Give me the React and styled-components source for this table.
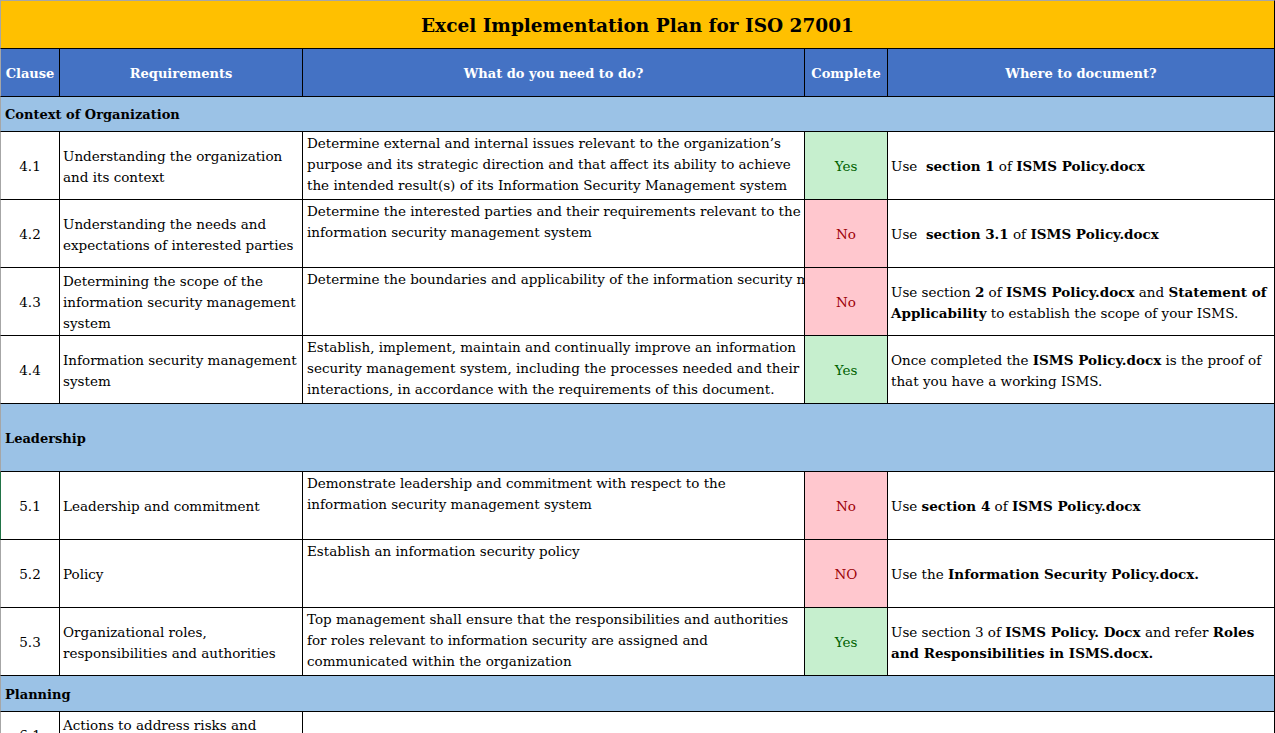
import React from 'react';
import styled, { createGlobalStyle } from 'styled-components';

const FONT = `"DejaVu Serif", "Liberation Serif", serif`;

const GlobalStyle = createGlobalStyle`
  html, body { margin: 0; padding: 0; background: #fff; }
  body { font-family: ${FONT}; color: #000; overflow: hidden; }
  * { box-sizing: border-box; }
`;

const Sheet = styled.div`
  width: 1275px;
  display: grid;
  grid-template-columns: 60px 243px 502px 83px 387px;
  font-size: 13.5px;
  line-height: 21px;
`;

const Title = styled.div`
  grid-column: 1 / -1;
  height: 49px;
  background: #ffc000;
  border: 1px solid #000;
  border-top-color: #a6a6a6;
  border-left-color: #a6a6a6;
  display: flex;
  align-items: center;
  justify-content: center;
  padding-top: 2px;
  font-weight: 700;
  font-size: 18.5px;
`;

const Cell = styled.div`
  height: ${(p) => p.$h || 68}px;
  border-right: 1px solid #000;
  border-bottom: 1px solid #000;
  background: #fff;
  display: flex;
  flex-direction: column;
  justify-content: center;
  padding: 2px 3px 0;
  overflow: hidden;
  white-space: nowrap;
`;

const HeadCell = styled(Cell)`
  height: 48px;
  background: #4472c4;
  color: #fff;
  font-weight: 700;
  font-size: 13px;
  align-items: center;
  border-left: ${(p) => (p.$first ? '1px solid #a6a6a6' : 'none')};
`;

const SectionRow = styled.div`
  grid-column: 1 / -1;
  height: ${(p) => p.$h}px;
  background: #9bc2e6;
  border-left: 1px solid #a6a6a6;
  border-right: 1px solid #000;
  border-bottom: 1px solid #000;
  display: flex;
  align-items: center;
  padding: 1px 4px 0;
  font-weight: 700;
  font-size: 13px;
`;

const ClauseCell = styled(Cell)`
  align-items: center;
  border-left: 1px solid ${(p) => (p.$marked ? '#217346' : '#a6a6a6')};
`;

const ReqCell = styled(Cell)``;

const TaskCell = styled(Cell)`
  justify-content: flex-start;
  padding: 1px 4px 0;
`;

const StatusCell = styled(Cell)`
  align-items: center;
  background: ${(p) => (p.$ok ? '#c6efce' : '#ffc7ce')};
  color: ${(p) => (p.$ok ? '#006100' : '#9c0006')};
`;

const DocCell = styled(Cell)``;

const OpenCell = styled(Cell)`
  grid-column: 3 / -1;
`;

const Line = styled.div``;

const rows = [
  {
    clause: '4.1',
    req: ['Understanding the organization', 'and its context'],
    task: [
      'Determine external and internal issues relevant to the organization’s',
      'purpose and its strategic direction and that affect its ability to achieve',
      'the intended result(s) of its Information Security Management system',
    ],
    status: 'Yes',
    doc: [<>Use&nbsp; <b>section 1</b> of <b>ISMS Policy.docx</b></>],
  },
  {
    clause: '4.2',
    req: ['Understanding the needs and', 'expectations of interested parties'],
    task: [
      'Determine the interested parties and their requirements relevant to the',
      'information security management system',
    ],
    status: 'No',
    doc: [<>Use&nbsp; <b>section 3.1</b> of <b>ISMS Policy.docx</b></>],
  },
  {
    clause: '4.3',
    req: ['Determining the scope of the', 'information security management', 'system'],
    task: ['Determine the boundaries and applicability of the information security management system to establish its scope.'],
    status: 'No',
    doc: [
      <>Use section <b>2</b> of <b>ISMS Policy.docx</b> and <b>Statement of</b></>,
      <><b>Applicability</b> to establish the scope of your ISMS.</>,
    ],
  },
  {
    clause: '4.4',
    req: ['Information security management', 'system'],
    task: [
      'Establish, implement, maintain and continually improve an information',
      'security management system, including the processes needed and their',
      'interactions, in accordance with the requirements of this document.',
    ],
    status: 'Yes',
    doc: [
      <>Once completed the <b>ISMS Policy.docx</b> is the proof of</>,
      <>that you have a working ISMS.</>,
    ],
  },
  { section: 'Leadership', h: 68 },
  {
    clause: '5.1',
    marked: true,
    req: ['Leadership and commitment'],
    task: [
      'Demonstrate leadership and commitment with respect to the',
      'information security management system',
    ],
    status: 'No',
    doc: [<>Use <b>section 4</b> of <b>ISMS Policy.docx</b></>],
  },
  {
    clause: '5.2',
    req: ['Policy'],
    task: ['Establish an information security policy'],
    status: 'NO',
    doc: [<>Use the <b>Information Security Policy.docx.</b></>],
  },
  {
    clause: '5.3',
    req: ['Organizational roles,', 'responsibilities and authorities'],
    task: [
      'Top management shall ensure that the responsibilities and authorities',
      'for roles relevant to information security are assigned and',
      'communicated within the organization',
    ],
    status: 'Yes',
    doc: [
      <>Use section 3 of <b>ISMS Policy. Docx</b> and refer <b>Roles</b></>,
      <><b>and Responsibilities in ISMS.docx.</b></>,
    ],
  },
  { section: 'Planning', h: 36 },
];

const Lines = ({ items }) => (
  <div>
    {items.map((t, i) => (
      <Line key={i}>{t}</Line>
    ))}
  </div>
);

export default function App() {
  return (
    <>
      <GlobalStyle />
      <Sheet>
        <Title>Excel Implementation Plan for ISO 27001</Title>
        <HeadCell $first>Clause</HeadCell>
        <HeadCell>Requirements</HeadCell>
        <HeadCell>What do you need to do?</HeadCell>
        <HeadCell>Complete</HeadCell>
        <HeadCell>Where to document?</HeadCell>
        <SectionRow $h={35}>Context of Organization</SectionRow>
        {rows.map((r, i) =>
          r.section ? (
            <SectionRow key={i} $h={r.h}>
              {r.section}
            </SectionRow>
          ) : (
            <React.Fragment key={i}>
              <ClauseCell $marked={r.marked}>
                <div>{r.clause}</div>
              </ClauseCell>
              <ReqCell>
                <Lines items={r.req} />
              </ReqCell>
              <TaskCell>
                <Lines items={r.task} />
              </TaskCell>
              <StatusCell $ok={r.status === 'Yes'}>
                <div>{r.status}</div>
              </StatusCell>
              <DocCell>
                <Lines items={r.doc} />
              </DocCell>
            </React.Fragment>
          )
        )}
        <ClauseCell $h={46}>
          <div>6.1</div>
        </ClauseCell>
        <ReqCell $h={46}>
          <Lines items={['Actions to address risks and', 'opportunities']} />
        </ReqCell>
        <OpenCell $h={46} />
      </Sheet>
    </>
  );
}
